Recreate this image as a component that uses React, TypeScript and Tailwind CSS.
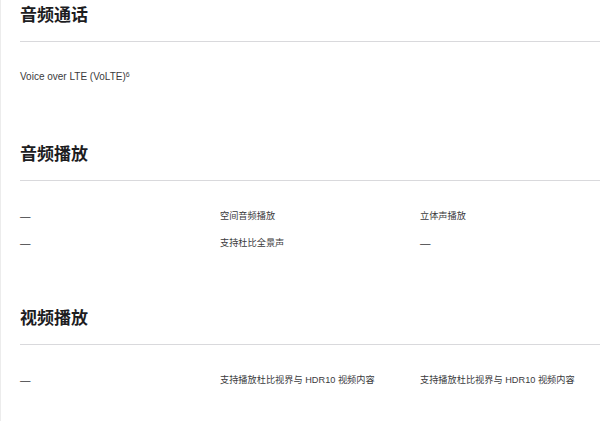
const sections = [
  {
    title: "音频通话",
    rows: [["Voice over LTE (VoLTE)", null, null]],
  },
  {
    title: "音频播放",
    rows: [
      ["—", "空间音频播放", "立体声播放"],
      ["—", "支持杜比全景声", "—"],
    ],
  },
  {
    title: "视频播放",
    rows: [["—", "支持播放杜比视界与 HDR10 视频内容", "支持播放杜比视界与 HDR10 视频内容"]],
  },
]

function Cell({ text }: { text: string }) {
  // the dash is drawn a bit wider than the rest of the row text
  return <span className={text === "—" ? "text-[10.5px]" : ""}>{text}</span>
}

export default function App() {
  return (
    <div
      className="w-[600px] h-[421px] bg-white border-l border-[#ececec] pl-[19px] overflow-hidden"
      style={{ fontFamily: '"Liberation Sans", "Noto Sans CJK SC", sans-serif' }}
    >
      {sections.map((s, i) => (
        <section key={s.title} className={i === 0 ? "pt-1" : i === 1 ? "pt-[59px]" : "pt-[57px]"}>
          <h2 className="text-[17px] leading-[24px] font-bold text-[#1d1d1f]">{s.title}</h2>
          <div className="mt-[13px] border-t border-[#d9d9dc]" />
          <div className="pt-[28px] flex flex-col gap-[13px]">
            {s.rows.map((r, j) =>
              r[1] === null ? (
                <p key={j} className="text-[10px] leading-[14px] text-[#3a3a3c]">
                  Voice over LTE (VoLTE)<sup className="text-[7px] align-top leading-none relative top-[1px]">6</sup>
                </p>
              ) : (
                <div key={j} className="grid grid-cols-[200px_200px_180px] text-[9.2px] leading-[14px] text-[#3a3a3c]">
                  <Cell text={r[0] as string} />
                  <Cell text={r[1] as string} />
                  <Cell text={r[2] as string} />
                </div>
              )
            )}
          </div>
        </section>
      ))}
    </div>
  )
}
